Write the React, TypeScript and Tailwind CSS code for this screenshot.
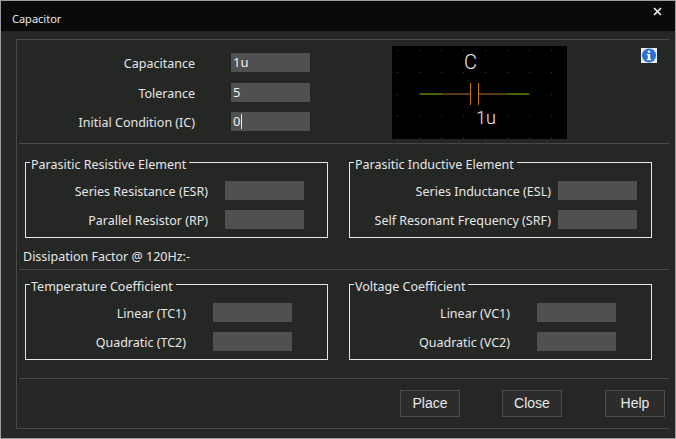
import React from "react";

const font = { fontFamily: '"Noto Sans", sans-serif' };

function Input({ value, caret }: { value?: string; caret?: boolean }) {
  return (
    <div className="flex h-[19px] w-[79px] shrink-0 items-center bg-[#505050] pl-[2px] text-[13px] leading-none text-[#f0f0f0]">
      {value}
      {caret && <span className="ml-[1px] h-[15px] w-px bg-[#e8e8e8]" />}
    </div>
  );
}

function Row({ label, labelW, gap, value, caret, className = "" }: { label: string; labelW: string; gap: string; value?: string; caret?: boolean; className?: string }) {
  return (
    <div className={`flex items-center ${gap} ${className}`}>
      <div className={`${labelW} whitespace-nowrap pt-[2px] text-right text-[12.5px] leading-[17px] text-[#e6e6e6]`}>{label}</div>
      <Input value={value} caret={caret} />
    </div>
  );
}

function Group({ title, children }: { title: string; children: React.ReactNode }) {
  return (
    <div className="relative h-[76px] w-[303px] border border-[#e6e6e6] pl-[4px] pt-[18px]">
      <span className="absolute -top-[6px] left-[4px] bg-[#252725] pl-px pr-[3px] text-[12.5px] leading-[16px] text-[#e6e6e6]">{title}</span>
      <div className="flex flex-col gap-[10px]">{children}</div>
    </div>
  );
}

function Divider({ className = "" }: { className?: string }) {
  return <div className={`h-px bg-[#484a48] ${className}`} />;
}

function Button({ label, className = "" }: { label: string; className?: string }) {
  return (
    <button className={`h-[27px] w-[60px] border border-[#4c4c4c] bg-[#2c2c2c] text-[14px] text-[#e8e8e8] ${className}`} style={{ fontFamily: '"Liberation Sans", sans-serif' }}>
      {label}
    </button>
  );
}

function Preview() {
  const xs = [5, 27, 49, 71, 93, 115, 137, 159];
  const ys = [4, 26, 48, 70, 92];
  return (
    <svg width="175" height="93" viewBox="0 0 175 93" className="block shrink-0 bg-black">
      {ys.map((y) => xs.map((x) => <rect key={`${x}-${y}`} x={x} y={y} width="1" height="1" fill="#3a3a3a" />))}
      <rect x="28" y="47" width="22" height="2" fill="#4a6400" />
      <rect x="50" y="47" width="28" height="2" fill="#553a14" />
      <rect x="87" y="47" width="28" height="2" fill="#553a14" />
      <rect x="115" y="47" width="22" height="2" fill="#4a6400" />
      <rect x="78" y="37" width="1" height="22" fill="#c87800" />
      <rect x="86" y="37" width="1" height="22" fill="#c87800" />
      <text x="72" y="23" fontSize="20" fontWeight="300" fill="#f0f0f0" fontFamily="Roboto, sans-serif">C</text>
      <text x="84" y="78" fontSize="18" fontWeight="300" fill="#f0f0f0" fontFamily="Roboto, sans-serif">1u</text>
    </svg>
  );
}

function InfoIcon() {
  return (
    <svg width="16" height="15" viewBox="0 0 16 15" className="block shrink-0">
      <rect width="16" height="15" fill="#e8eef8" />
      <circle cx="8" cy="7.5" r="7" fill="#2a6fdc" />
      <rect x="6.8" y="2.6" width="2.4" height="2.2" fill="#fff" />
      <path d="M5.8 6h3.4v5h1v1.2H5.8V11h1V7.2h-1z" fill="#fff" />
    </svg>
  );
}

export default function App() {
  return (
    <div className="h-[439px] w-[676px] overflow-hidden border border-[#9c9c9c] bg-[#252725]" style={font}>
      <div className="flex h-[30px] items-center justify-between bg-[#0a0a0a] pl-[11px] pr-[13px] text-[11px] text-[#e8e8e8]">
        <span className="mt-[6px]">Capacitor</span>
        <svg width="9" height="9" viewBox="0 0 9 9" className="mb-[9px]">
          <path d="M1 1l7 7M8 1L1 8" stroke="#f4f4f4" strokeWidth="1.6" />
        </svg>
      </div>
      <div className="ml-[15px] mr-[6px] mt-[8px] h-[390px] border border-r-0 border-[#484a48] pl-[2px]">
        <div className="flex h-[103px] pr-[10px]">
          <div className="flex w-[291px] flex-col gap-[10px] pt-[13px]">
            <Row label="Capacitance" labelW="w-[176px]" gap="gap-[36px]" value="1u" className="mb-px" />
            <Row label="Tolerance" labelW="w-[176px]" gap="gap-[36px]" value="5" />
            <Row label="Initial Condition (IC)" labelW="w-[176px]" gap="gap-[36px]" value="0" caret />
          </div>
          <div className="ml-[82px] mt-[6px]">
            <Preview />
          </div>
          <div className="ml-[74px] mt-[8px]">
            <InfoIcon />
          </div>
        </div>
        <Divider />
        <div className="flex gap-[21px] pl-[6px] pt-[18px]">
          <Group title="Parasitic Resistive Element">
            <Row label="Series Resistance (ESR)" labelW="w-[178px]" gap="gap-[17px]" />
            <Row label="Parallel Resistor (RP)" labelW="w-[178px]" gap="gap-[17px]" />
          </Group>
          <Group title="Parasitic Inductive Element">
            <Row label="Series Inductance (ESL)" labelW="w-[197px]" gap="gap-[7px]" />
            <Row label="Self Resonant Frequency (SRF)" labelW="w-[197px]" gap="gap-[7px]" />
          </Group>
        </div>
        <div className="flex h-[31px] items-end pb-[3px] pl-[4px] text-[12.5px] leading-[19px] text-[#e6e6e6]">Dissipation Factor @ 120Hz:-</div>
        <Divider />
        <div className="flex gap-[21px] pl-[6px] pt-[14px]">
          <Group title="Temperature Coefficient">
            <Row label="Linear (TC1)" labelW="w-[156px]" gap="gap-[27px]" />
            <Row label="Quadratic (TC2)" labelW="w-[156px]" gap="gap-[27px]" />
          </Group>
          <Group title="Voltage Coefficient">
            <Row label="Linear (VC1)" labelW="w-[156px]" gap="gap-[27px]" />
            <Row label="Quadratic (VC2)" labelW="w-[156px]" gap="gap-[27px]" />
          </Group>
        </div>
        <Divider className="mt-[18px]" />
        <div className="flex pl-[381px] pt-[11px]">
          <Button label="Place" />
          <Button label="Close" className="ml-[42px]" />
          <Button label="Help" className="ml-[43px]" />
        </div>
      </div>
    </div>
  );
}
